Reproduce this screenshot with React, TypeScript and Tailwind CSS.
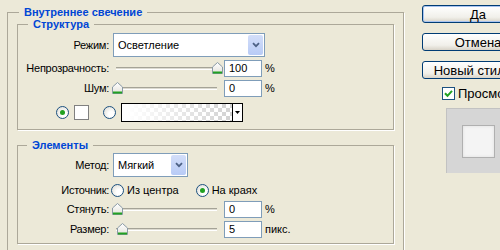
import React from "react";

type Row = { label: string };

const Radio = ({ checked = false }: { checked?: boolean }) => (
  <span className="flex h-[13px] w-[13px] shrink-0 items-center justify-center rounded-full border border-[#1C5180] bg-[radial-gradient(circle_at_65%_65%,#ffffff_25%,#d9d8cf_100%)]">
    {checked && <span className="h-[5px] w-[5px] rounded-full bg-[#21A121]" />}
  </span>
);

const NumBox = ({ value }: { value: string }) => (
  <div className="flex h-[17px] w-[38px] shrink-0 items-center border border-[#7F9DB9] bg-white pl-[4px]">
    {value}
  </div>
);

const Thumb = ({ left }: { left: number }) => (
  <svg className="absolute top-[2px]" style={{ left }} width="11" height="12" viewBox="0 0 11 12">
    <defs>
      <linearGradient id="thumbFill" x1="0" y1="0" x2="0" y2="1">
        <stop offset="0" stopColor="#ffffff" />
        <stop offset="1" stopColor="#e4e3dc" />
      </linearGradient>
    </defs>
    <path d="M0.5 5 L5.5 0.5 L10.5 5 V11.5 H0.5 Z" fill="url(#thumbFill)" stroke="#8a9aa6" />
    <path d="M1 10.5 H10" stroke="#21A121" strokeWidth="2" />
  </svg>
);

// thumb offset is in px from the left of the slider area
const Slider = ({ thumb }: { thumb: number }) => (
  <div className="relative h-full w-[111px] shrink-0">
    <div className="absolute left-[3px] top-[7px] h-[3px] w-[101px] border-t border-b border-t-[#a5a397] border-b-white bg-[#dcdad0]" />
    <Thumb left={thumb} />
  </div>
);

const Combo = ({ value, width }: { value: string; width: string }) => (
  <div className={`flex h-[24px] shrink-0 items-center border border-[#7F9DB9] bg-white ${width}`}>
    <span className="flex-1 pl-[4px] text-[11px]">{value}</span>
    <span className="mr-px flex h-[20px] w-[15px] items-center justify-center rounded-[2px] bg-[linear-gradient(#d3def9,#b8cbf6)]">
      <svg width="8" height="6" viewBox="0 0 8 6">
        <path d="M1 1.2 L4 4.2 L7 1.2" stroke="#4d6185" strokeWidth="1.8" fill="none" />
      </svg>
    </span>
  </div>
);

const Label = ({ label }: Row) => (
  <span className="w-[91px] shrink-0 text-right tracking-[-0.25px]">{label}</span>
);

const SliderRow = ({
  label,
  value,
  thumb,
  unit,
  className,
}: {
  label: string;
  value: string;
  thumb: number;
  unit: string;
  className: string;
}) => (
  <div className={`flex h-[17px] items-center ${className}`}>
    <Label label={label} />
    <div className="ml-[4px] flex h-full items-center">
      <Slider thumb={thumb} />
      <NumBox value={value} />
      <span className="ml-[3px]">{unit}</span>
    </div>
  </div>
);

const Button = ({ text, isDefault = false, className = "" }: { text: string; isDefault?: boolean; className?: string }) => (
  <div
    className={`flex h-[18px] w-[112px] items-center justify-center rounded-[3px] border border-[#003C74] bg-[linear-gradient(#ffffff,#f1f0ea_70%,#d8d3c8)] text-[13px] leading-none ${
      isDefault ? "shadow-[inset_0_0_0_1px_#a9c4f0]" : ""
    } ${className}`}
  >
    {text}
  </div>
);

export default function App() {
  return (
    <div className="flex h-[250px] w-[500px] overflow-hidden bg-[#ECE9D8] font-['Liberation_Sans',Arial,sans-serif] text-[11px] leading-[13px] text-black">
      <fieldset className="ml-[7px] mt-[6px] h-[270px] w-[397px] shrink-0 border border-[#ACA899] shadow-[1px_1px_0_#ffffff]">
        <legend className="ml-[11px] px-[5px] text-[11px] font-bold leading-[12px] text-[#0046D5]">
          Внутреннее свечение
        </legend>

        <fieldset className="ml-[9px] w-[377px] border border-[#ACA899] pb-[8px] shadow-[1px_1px_0_#ffffff]">
          <legend className="ml-[10px] px-[5px] text-[11px] font-bold leading-[12px] text-[#0046D5]">
            Структура
          </legend>
          <div className="mt-[3px] flex h-[24px] items-center">
            <Label label="Режим:" />
            <div className="ml-[4px]">
              <Combo value="Осветление" width="w-[152px]" />
            </div>
          </div>
          <SliderRow label="Непрозрачность:" value="100" thumb={99} unit="%" className="mt-[3px]" />
          <SliderRow label="Шум:" value="0" thumb={-1} unit="%" className="mt-[3px]" />
          <div className="mt-[6px] flex h-[18px] items-center pl-[38px]">
            <Radio checked />
            <span className="ml-[5px] h-[15px] w-[15px] border border-[#808080] bg-white" />
            <span className="ml-[14px]">
              <Radio />
            </span>
            <div className="ml-[5px] flex h-[19px] w-[122px] border border-black">
              <div className="flex-1 [background-image:linear-gradient(to_right,#ffffff_5%,rgba(255,255,255,0)),repeating-conic-gradient(#d2d2d2_0%_25%,#ffffff_0%_50%)] [background-size:100%_100%,8px_8px]" />
              <div className="flex w-[10px] items-center justify-center border-l border-black bg-white">
                <svg width="5" height="3" viewBox="0 0 5 3">
                  <path d="M0 0 H5 L2.5 3 Z" fill="#000" />
                </svg>
              </div>
            </div>
          </div>
        </fieldset>

        <fieldset className="ml-[9px] mt-[9px] w-[377px] border border-[#ACA899] pb-[5px] shadow-[1px_1px_0_#ffffff]">
          <legend className="ml-[9px] px-[5px] text-[11px] font-bold leading-[12px] text-[#0046D5]">
            Элементы
          </legend>
          <div className="mt-[2px] flex h-[24px] items-center">
            <Label label="Метод:" />
            <div className="ml-[4px]">
              <Combo value="Мягкий" width="w-[75px]" />
            </div>
          </div>
          <div className="mt-[5px] flex h-[16px] items-center">
            <Label label="Источник:" />
            <div className="ml-[2px] flex items-center">
              <Radio />
              <span className="ml-[3px]">Из центра</span>
              <span className="ml-[17px]">
                <Radio checked />
              </span>
              <span className="ml-[3px]">На краях</span>
            </div>
          </div>
          <SliderRow label="Стянуть:" value="0" thumb={-1} unit="%" className="mt-[3px]" />
          <SliderRow label="Размер:" value="5" thumb={4} unit="пикс." className="mt-[3px]" />
        </fieldset>
      </fieldset>

      <div className="ml-[18px] mt-[5px] flex shrink-0 flex-col">
        <Button text="Да" isDefault />
        <Button text="Отмена" className="mt-[10px]" />
        <Button text="Новый стиль..." className="mt-[10px]" />
        <div className="mt-[8px] ml-[20px] flex h-[13px] items-center">
          <span className="flex h-[13px] w-[13px] items-center justify-center border border-[#1C5180] bg-white">
            <svg width="9" height="9" viewBox="0 0 9 9">
              <path d="M1 4.2 L3.5 6.8 L8 1.8" stroke="#21A121" strokeWidth="2" fill="none" />
            </svg>
          </span>
          <span className="ml-[3px] text-[13px]">Просмотр</span>
        </div>
        <div className="ml-[24px] mt-[8px] flex h-[65px] w-[80px] border-l border-t border-[#c2c2c2] bg-[#D6D6D6] pl-[15px] pt-[16px]">
          <div className="h-[33px] w-[33px] border border-[#b0b0b0] bg-[#f4f4f4] shadow-[inset_0_0_3px_#dcdcdc]" />
        </div>
      </div>
    </div>
  );
}
